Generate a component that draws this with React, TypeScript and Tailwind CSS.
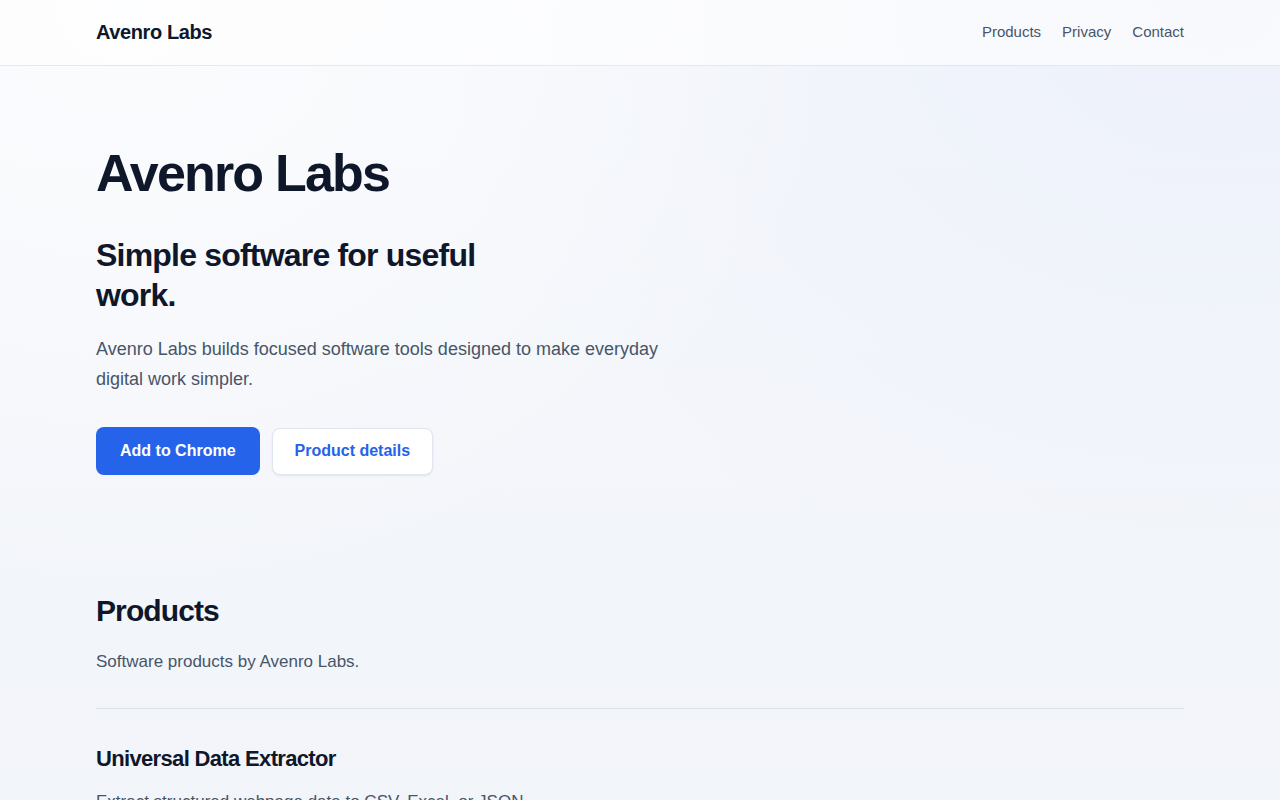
export default function App() {
  return (
    <div className="min-h-screen bg-[#f2f5fa] bg-[radial-gradient(ellipse_at_10%_0%,#fbfcfe_0%,rgba(251,252,254,0)_45%),radial-gradient(ellipse_at_95%_0%,#edf1fb_0%,rgba(237,241,251,0)_45%),linear-gradient(180deg,#f5f7fb_0%,#f1f4f9_100%)] font-['Liberation_Sans',Arial,sans-serif] text-[#0f172a]">
      <header className="h-[66px] border-b border-[#e2e8f0] bg-white/60">
        <div className="mx-auto flex h-16 max-w-6xl items-center justify-between px-8">
          <a className="text-[20px] font-bold tracking-[-0.02em] text-[#0f172a]">Avenro Labs</a>
          <nav className="flex items-center gap-[21px] text-[15px] text-[#475569]">
            <a>Products</a>
            <a>Privacy</a>
            <a>Contact</a>
          </nav>
        </div>
      </header>

      <main className="mx-auto max-w-6xl px-8">
        <section className="pt-[79px]">
          <h1 className="text-[52px] font-bold leading-[57px] tracking-[-0.035em]">Avenro Labs</h1>
          <h2 className="mt-[33px] max-w-[440px] text-[32px] font-bold leading-[40px] tracking-[-0.025em]">
            Simple software for useful work.
          </h2>
          <p className="mt-[19px] max-w-xl text-[18px] leading-[30px] text-[#475569]">
            Avenro Labs builds focused software tools designed to make everyday digital work simpler.
          </p>
          <div className="mt-[33px] flex items-center gap-3">
            <a className="flex h-12 items-center rounded-lg bg-[#2563eb] px-6 text-[16px] font-bold text-white">
              Add to Chrome
            </a>
            <a className="flex h-[47px] items-center rounded-lg border border-[#dfe5ee] bg-white px-[22px] text-[16px] font-bold text-[#2563eb] shadow-[0_1px_2px_rgba(15,23,42,0.08)]">
              Product details
            </a>
          </div>
        </section>

        <section className="pt-[118px]">
          <h2 className="text-[30px] font-bold leading-[36px] tracking-[-0.03em]">Products</h2>
          <p className="mt-[19px] text-[17px] leading-[28px] text-[#475569]">Software products by Avenro Labs.</p>
          <div className="mt-[32px] border-t border-[#dde3ec]" />
          <div className="pt-9">
            <h3 className="text-[22px] font-bold leading-[28px] tracking-[-0.03em]">Universal Data Extractor</h3>
            <p className="mt-[15px] text-[17px] leading-[28px] text-[#475569]">
              Extract structured webpage data to CSV, Excel, or JSON.
            </p>
            <div className="h-40" />
          </div>
        </section>
      </main>
    </div>
  );
}
